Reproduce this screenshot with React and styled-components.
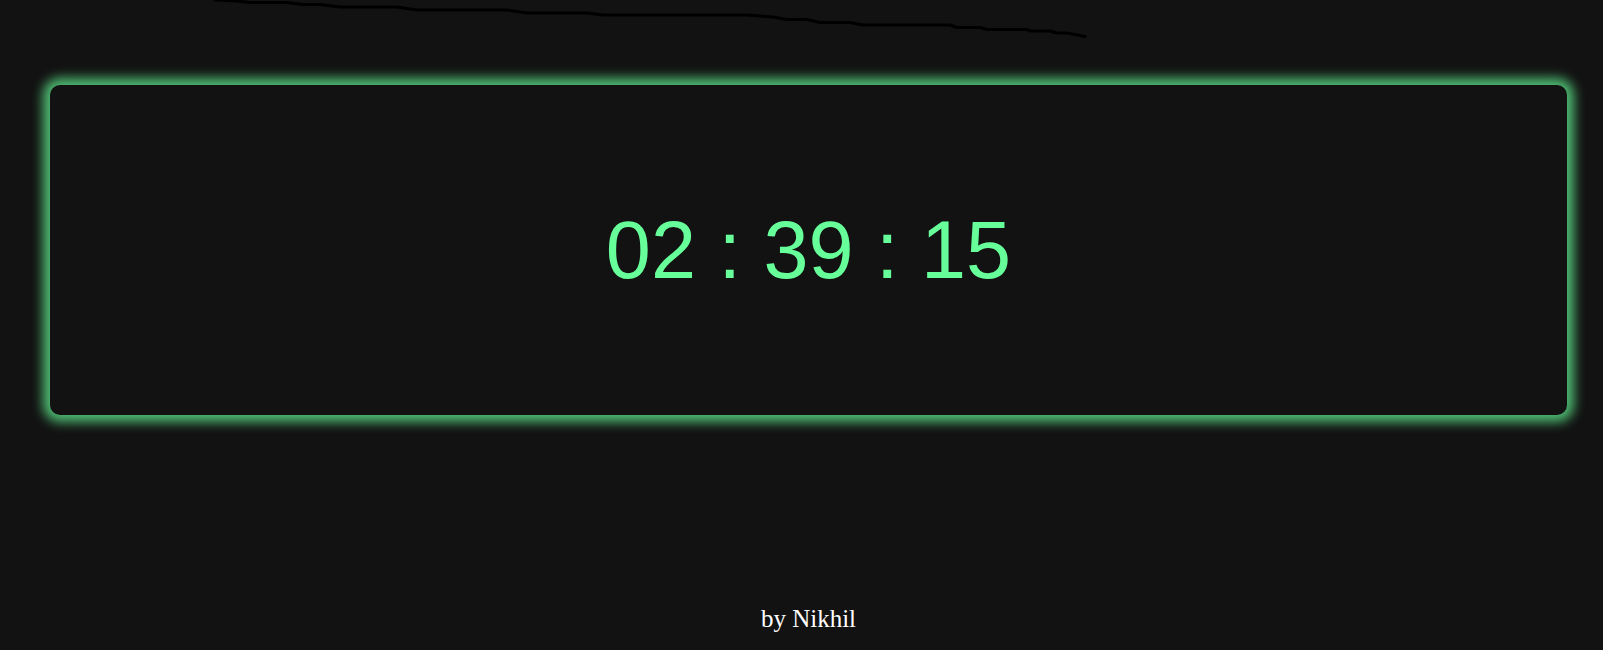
import React from "react";
import styled, { createGlobalStyle } from "styled-components";

const Global = createGlobalStyle`
  html, body {
    margin: 0;
    padding: 0;
    background: #121212;
  }
  #root {
    min-height: 650px;
  }
`;

const Page = styled.div`
  position: relative;
  height: 650px;
  box-sizing: border-box;
  padding: 85px 0 0 14px;
  display: flex;
  flex-direction: column;
  background: #121212;
  overflow: hidden;
`;

const Scribble = styled.svg`
  position: absolute;
  left: 0;
  top: 0;
  width: 1100px;
  height: 45px;
  pointer-events: none;
`;

const ClockCard = styled.div`
  margin: 0 36px;
  height: 330px;
  border-radius: 10px;
  background: #121212;
  box-shadow: 0 0 12px 7px rgba(102, 255, 153, 0.72);
  display: flex;
  align-items: center;
  justify-content: center;
`;

const Time = styled.h1`
  margin: 0;
  font-family: "Liberation Sans", Arial, sans-serif;
  font-weight: 400;
  font-size: 81px;
  color: #66ff99;
  letter-spacing: 0;
`;

const Footer = styled.footer`
  margin-top: 190px;
  text-align: center;
  font-family: "Liberation Serif", "Times New Roman", serif;
  font-size: 25px;
  color: #ffffff;
`;

const points = [
  [215, 0], [237, 1], [250, 2.5], [287, 2.5], [303, 4.5], [320, 4.5], [340, 7],
  [397, 7], [417, 10], [507, 10], [527, 13], [587, 13], [603, 15], [747, 15],
  [773, 17], [787, 19.5], [807, 19.5], [820, 22.5], [850, 22.5], [863, 25],
  [950, 25], [957, 27.5], [980, 27.5], [987, 29.5], [1027, 29.5], [1030, 31],
  [1050, 31], [1057, 33], [1067, 33], [1077, 35], [1085, 36.5],
]
  .map((p) => p.join(","))
  .join(" ");

export default function App() {
  return (
    <>
      <Global />
      <Page>
        <Scribble viewBox="0 0 1100 45">
          <polyline
            points={points}
            fill="none"
            stroke="#000"
            strokeWidth="3"
            strokeLinejoin="round"
            strokeLinecap="round"
          />
        </Scribble>
        <ClockCard>
          <Time>02 : 39 : 15</Time>
        </ClockCard>
        <Footer>by Nikhil</Footer>
      </Page>
    </>
  );
}
